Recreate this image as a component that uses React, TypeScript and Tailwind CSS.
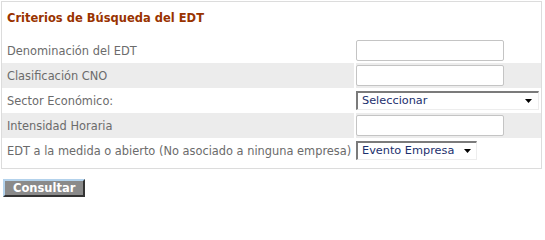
import React from "react";

const font = { fontFamily: '"DejaVu Sans", Verdana, sans-serif' };

function TextBox() {
  return (
    <input
      type="text"
      className="w-[148px] h-[21px] border border-[#c4c4c4] rounded-[2px] bg-white outline-none"
    />
  );
}

function Select({ label, w, arrowGap }: { label: string; w: string; arrowGap: string }) {
  return (
    <div
      className={`${w} h-[19px] flex items-center justify-between bg-white border-t-2 border-l-2 border-t-[#7b7b7b] border-l-[#7b7b7b] border-r border-b border-r-[#ededed] border-b-[#ededed] pl-[4px] ${arrowGap}`}
    >
      <span className="text-[11.3px] leading-[14px] text-[#1b2f6e] whitespace-nowrap">{label}</span>
      <svg width="7" height="4" viewBox="0 0 7 4" className="shrink-0">
        <polygon points="0,0 7,0 3.5,4" fill="#000" />
      </svg>
    </div>
  );
}

function Row({ label, gray, children }: { label: string; gray?: boolean; children: React.ReactNode }) {
  const bg = gray ? "bg-[#ececec]" : "bg-white";
  return (
    <div className="flex h-[25px] gap-[2px]">
      <div className={`w-[352px] ${bg} flex items-center pl-[5px]`}>
        <span className="text-[11.4px] leading-[14px] text-[#6b6b6b] whitespace-nowrap">{label}</span>
      </div>
      <div className={`flex-1 ${bg} flex items-center`}>{children}</div>
    </div>
  );
}

export default function App() {
  return (
    <div className="w-[545px] h-[204px] bg-white pt-px" style={font}>
      <div className="ml-px w-[541px] border border-[#dcdcdc] pb-[5px]">
        <div className="pt-[3px] pl-[5px] h-[36px]">
          <span className="text-[11.5px] leading-[16px] font-bold text-[#993300] whitespace-nowrap">
            Criterios de Búsqueda del EDT
          </span>
        </div>
        <Row label="Denominación del EDT">
          <TextBox />
        </Row>
        <Row label="Clasificación CNO" gray>
          <TextBox />
        </Row>
        <Row label="Sector Económico:">
          <Select label="Seleccionar" w="w-[183px]" arrowGap="pr-[6px]" />
        </Row>
        <Row label="Intensidad Horaria" gray>
          <TextBox />
        </Row>
        <Row label="EDT a la medida o abierto (No asociado a ninguna empresa)">
          <Select label="Evento Empresa" w="w-[121px]" arrowGap="pr-[5px]" />
        </Row>
      </div>
      <div className="mt-[10px] ml-[3px]">
        <button
          type="button"
          className="w-[82px] h-[18px] flex items-center pl-[8px] bg-[#8a8a8a] border-t-2 border-l-2 border-t-[#b3d2ec] border-l-[#b3d2ec] border-r-2 border-b-2 border-r-[#333333] border-b-[#333333] text-white font-bold text-[11.5px] leading-[14px]"
        >
          Consultar
        </button>
      </div>
    </div>
  );
}
